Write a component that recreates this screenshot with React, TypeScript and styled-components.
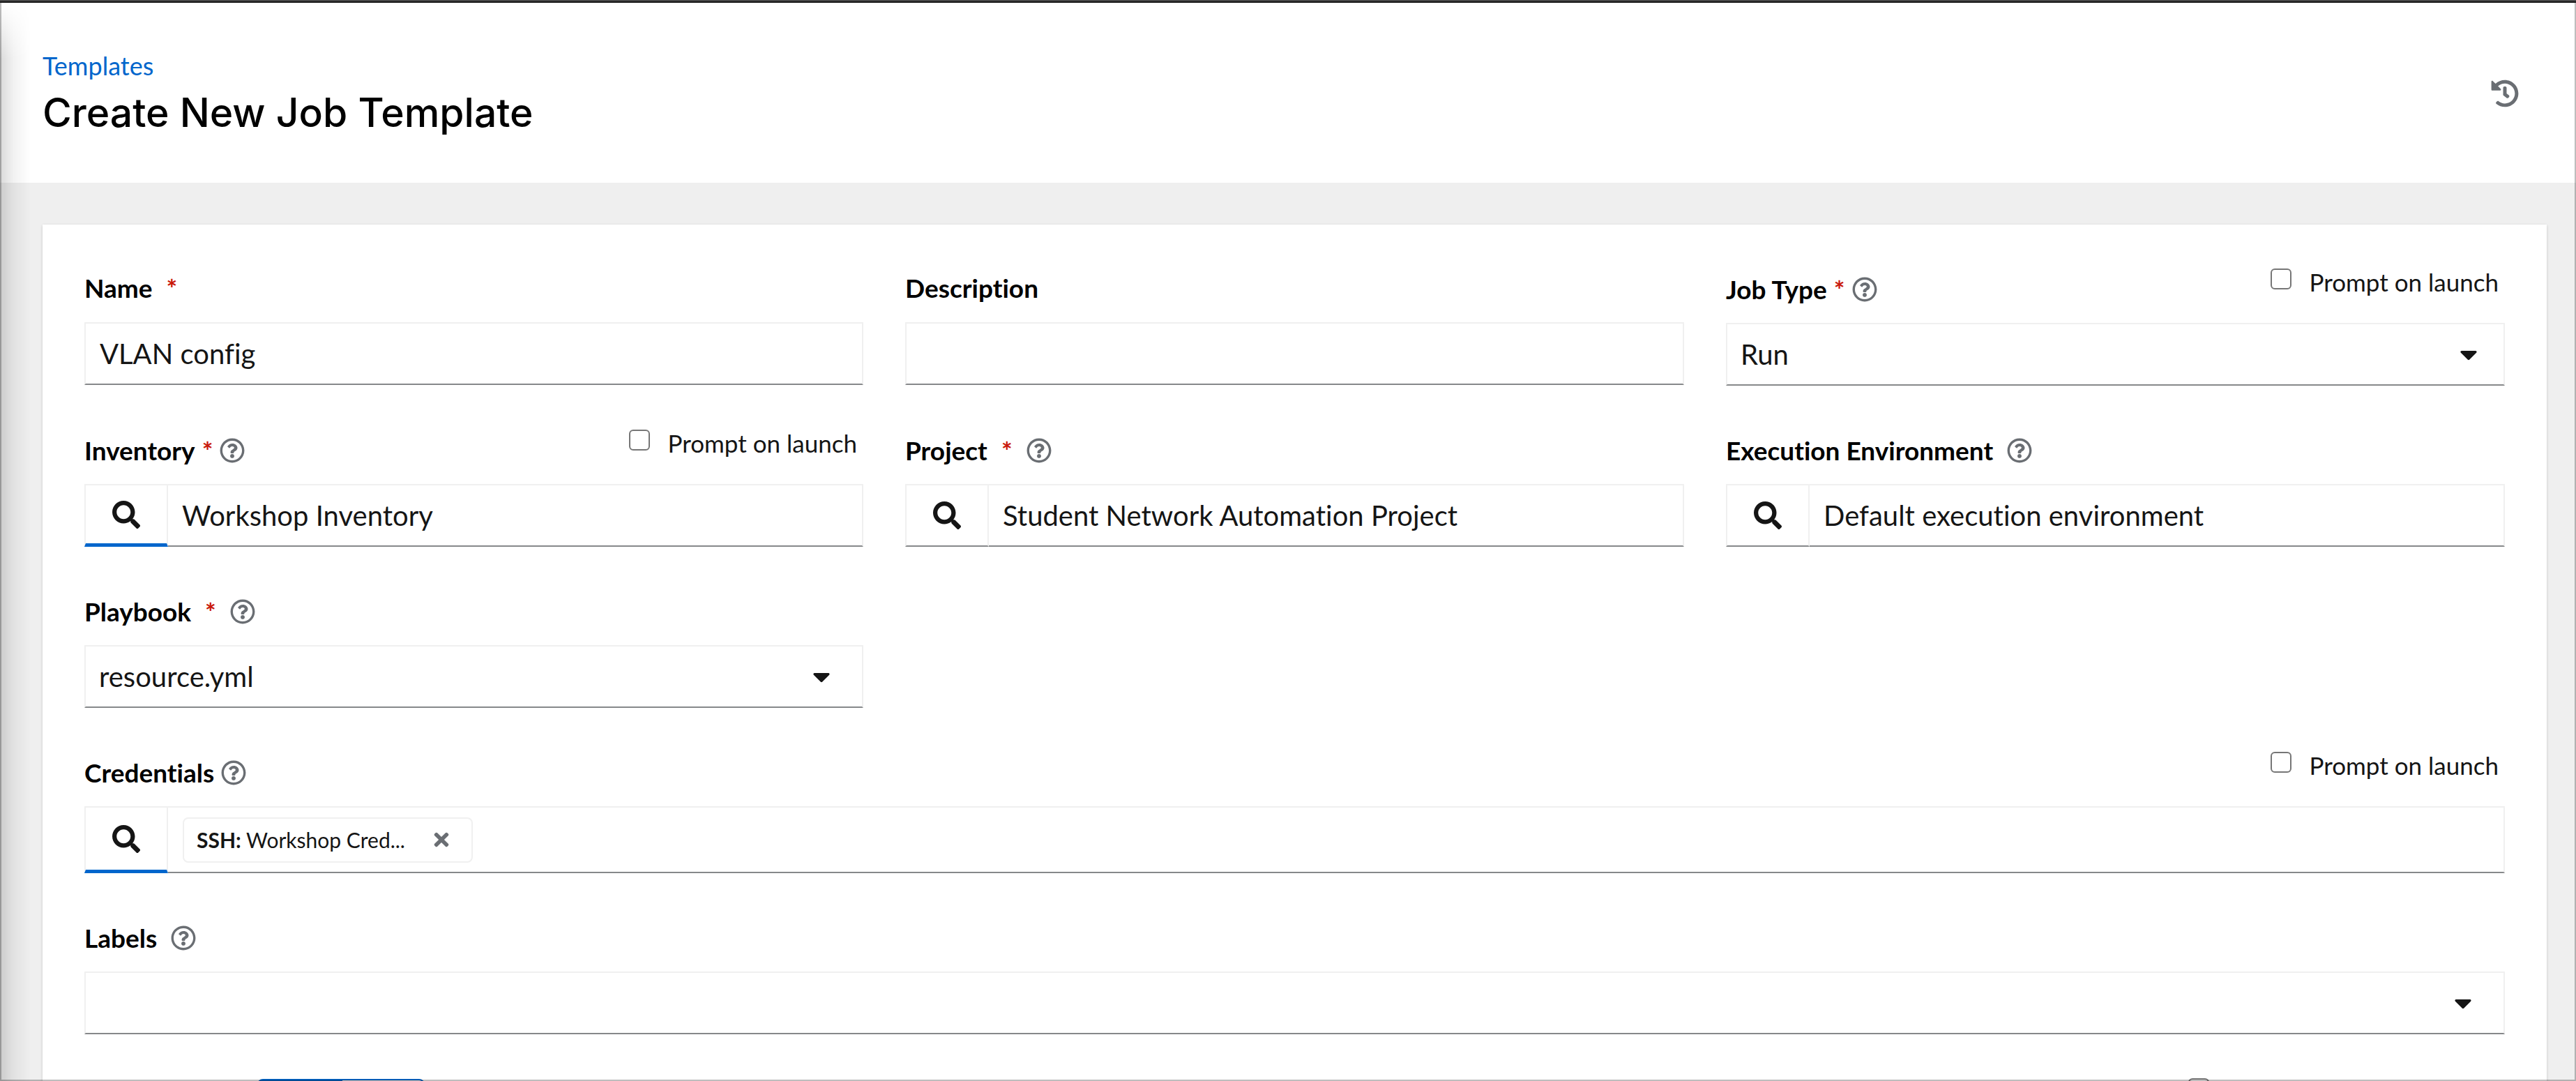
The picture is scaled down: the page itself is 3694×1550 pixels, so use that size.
import React, { useId } from 'react';
import styled, { createGlobalStyle } from 'styled-components';
import { FaCaretDown, FaHistory, FaRegQuestionCircle, FaSearch, FaTimes } from 'react-icons/fa';

const GlobalStyle = createGlobalStyle`
  * { box-sizing: border-box; }
  body {
    margin: 0;
    background: #efefef;
    color: #151515;
    font-family: Lato, 'Open Sans', sans-serif;
    font-size: 40px;
    font-variant-ligatures: none;
  }
  button, input, select { font-family: inherit; font-variant-ligatures: inherit; color: inherit; margin: 0; }
`;

const Page = styled.div`
  position: relative;
  height: 100vh;
  overflow: hidden;
  display: flex;
  flex-direction: column;

  &::after {
    content: '';
    position: absolute;
    inset: 4px 0 0;
    border: 2px solid rgba(0, 0, 0, 0.26);
    border-top: 0;
    pointer-events: none;
  }
`;

const MastheadEdge = styled.div`
  flex: none;
  height: 4px;
  background: #151515;
  border-top: 2px solid #484848;
`;

const SidebarShadow = styled.div`
  position: absolute;
  top: 4px;
  bottom: 0;
  left: 0;
  width: 44px;
  background: linear-gradient(to right, rgba(0, 0, 0, 0.15), rgba(0, 0, 0, 0.05) 45%, transparent);
  mask-image: linear-gradient(to bottom, transparent, #000 80px);
  pointer-events: none;
`;

const Header = styled.header`
  flex: none;
  display: flex;
  align-items: center;
  justify-content: space-between;
  padding: 62px 82px 60px 61px;
  background: #fff;
`;

const Breadcrumb = styled.a`
  display: block;
  font-size: 36px;
  line-height: 56px;
  color: #0066cc;
  text-decoration: none;
`;

const Title = styled.h1`
  margin: 0;
  font-family: Inter, sans-serif;
  font-size: 57px;
  line-height: 80px;
  font-weight: 500;
  color: #000;
`;

const IconButton = styled.button`
  display: flex;
  padding: 0;
  border: 0;
  background: none;
  color: #6a6e73;
  cursor: pointer;
`;

const Main = styled.main`
  flex: none;
  padding: 60px 42px 60px 61px;
`;

const Card = styled.form`
  display: grid;
  grid-template-columns: repeat(3, minmax(0, 1fr));
  gap: 60px;
  align-items: start;
  padding: 60px;
  background: #fff;
  box-shadow: 0 2px 4px rgba(3, 3, 3, 0.12), 0 0 4px rgba(3, 3, 3, 0.06);
`;

const Group = styled.div<{ $full?: boolean; $alone?: boolean }>`
  ${(p) => p.$full && 'grid-column: 1 / -1;'}
  ${(p) => p.$alone && 'grid-column: 1 / 2;'}
`;

const LabelRow = styled.div<{ $short?: boolean }>`
  display: flex;
  justify-content: space-between;
  align-items: flex-start;
  height: ${(p) => (p.$short ? 80 : 81)}px;
  padding-top: ${(p) => (p.$short ? 8 : 0)}px;
`;

const LabelCell = styled.div<{ $gap: number; $help?: boolean }>`
  display: flex;
  align-items: center;
  gap: ${(p) => p.$gap}px;
  padding-top: ${(p) => (p.$help ? 10 : 0)}px;
`;

const Label = styled.label<{ $gap: number }>`
  display: flex;
  gap: ${(p) => p.$gap}px;
  font-size: 37px;
  line-height: 46px;
  font-weight: 700;
  color: #000;
`;

const Required = styled.span`
  color: #c9190b;
`;

const Prompt = styled.label`
  display: flex;
  align-items: flex-start;
  gap: 25px;
  padding-right: 9px;
  font-size: 35px;
  line-height: 45px;
`;

const Checkbox = styled.input`
  appearance: none;
  width: 30px;
  height: 30px;
  margin-top: 3px;
  border: 2px solid #767676;
  border-radius: 6px;
  background: #fff;
`;

const Box = styled.div<{ $tall?: boolean }>`
  position: relative;
  display: flex;
  height: ${(p) => (p.$tall ? 96 : 90)}px;
`;

const edge = `
  border: 2px solid #f0f0f0;
  border-bottom-color: #86888a;
  border-radius: 0;
  background: #fff;
`;

const TextInput = styled.input<{ $joined?: boolean }>`
  ${edge}
  ${(p) => p.$joined && 'border-left: 0;'}
  flex: 1;
  min-width: 0;
  padding: 0 20px;
  font-size: 40px;
`;

const Select = styled.select`
  ${edge}
  appearance: none;
  flex: 1;
  min-width: 0;
  padding: 0 19px;
  font-size: 40px;
`;

const Caret = styled(FaCaretDown)<{ $inset: number }>`
  position: absolute;
  top: 25px;
  right: ${(p) => p.$inset}px;
  width: 40px;
  height: 40px;
  pointer-events: none;
`;

const SearchButton = styled.button<{ $active?: boolean }>`
  ${edge}
  flex: none;
  width: 120px;
  display: flex;
  align-items: center;
  justify-content: center;
  padding: 0;
  cursor: pointer;
  ${(p) => p.$active && 'border-bottom: 5px solid #0066cc;'}
`;

const ChipArea = styled.div`
  ${edge}
  border-left: 0;
  flex: 1;
  display: flex;
  align-items: center;
  padding: 0 21px;
`;

const Chip = styled.div`
  display: flex;
  align-items: center;
  justify-content: space-between;
  width: 416px;
  height: 65px;
  padding: 0 28px 0 18px;
  border: 2px solid #f0f0f0;
  border-radius: 8px;
  font-size: 30px;
  white-space: nowrap;
`;

const VariablesRow = styled.div`
  grid-column: 1 / -1;
  display: flex;
  justify-content: space-between;
  align-items: flex-start;
  padding: 0 424px 0 248px;
`;

const ToggleGroup = styled.div`
  display: flex;
  margin-top: 4px;
`;

const Toggle = styled.button<{ $on?: boolean }>`
  width: 120px;
  height: 60px;
  border: 2px solid #0066cc;
  border-radius: ${(p) => (p.$on ? '8px 0 0 8px' : '0 8px 8px 0')};
  background: ${(p) => (p.$on ? '#0066cc' : '#fff')};
`;

type FieldProps = {
  label: string;
  required?: boolean;
  help?: boolean;
  tight?: boolean;
  prompt?: boolean;
  full?: boolean;
  alone?: boolean;
  children: (id: string) => React.ReactNode;
};

function Field({ label, required, help, tight, prompt, full, alone, children }: FieldProps) {
  const id = useId();
  const gap = tight ? 10 : 20;
  return (
    <Group $full={full} $alone={alone}>
      <LabelRow $short={!help}>
        <LabelCell $gap={gap} $help={help}>
          <Label htmlFor={id} $gap={gap}>
            {label}
            {required && <Required aria-hidden="true">*</Required>}
          </Label>
          {help && (
            <IconButton type="button" aria-label={`More info for ${label}`}>
              <FaRegQuestionCircle size={36} />
            </IconButton>
          )}
        </LabelCell>
        {prompt && (
          <Prompt>
            <Checkbox type="checkbox" />
            Prompt on launch
          </Prompt>
        )}
      </LabelRow>
      {children(id)}
    </Group>
  );
}

function SelectBox({ id, options, inset }: { id: string; options: string[]; inset: number }) {
  return (
    <Box>
      <Select id={id}>
        {options.map((o) => (
          <option key={o}>{o}</option>
        ))}
      </Select>
      <Caret $inset={inset} />
    </Box>
  );
}

function Lookup({ id, value, active }: { id: string; value: string; active?: boolean }) {
  return (
    <Box>
      <SearchButton type="button" aria-label="Search" $active={active}>
        <FaSearch size={40} />
      </SearchButton>
      <TextInput id={id} type="text" defaultValue={value} $joined />
    </Box>
  );
}

export default function App() {
  return (
    <>
      <GlobalStyle />
      <Page>
        <MastheadEdge />
        <Header>
          <div>
            <Breadcrumb href="#templates">Templates</Breadcrumb>
            <Title>Create New Job Template</Title>
          </div>
          <IconButton type="button" aria-label="View activity stream">
            <FaHistory size={40} />
          </IconButton>
        </Header>
        <Main>
          <Card>
            <Field label="Name" required>
              {(id) => (
                <Box>
                  <TextInput id={id} type="text" defaultValue="VLAN config" />
                </Box>
              )}
            </Field>
            <Field label="Description">
              {(id) => (
                <Box>
                  <TextInput id={id} type="text" />
                </Box>
              )}
            </Field>
            <Field label="Job Type" required help tight prompt>
              {(id) => <SelectBox id={id} options={['Run']} inset={32} />}
            </Field>
            <Field label="Inventory" required help tight prompt>
              {(id) => <Lookup id={id} value="Workshop Inventory" active />}
            </Field>
            <Field label="Project" required help>
              {(id) => <Lookup id={id} value="Student Network Automation Project" />}
            </Field>
            <Field label="Execution Environment" help>
              {(id) => <Lookup id={id} value="Default execution environment" />}
            </Field>
            <Field label="Playbook" required help alone>
              {(id) => <SelectBox id={id} options={['resource.yml']} inset={40} />}
            </Field>
            <Field label="Credentials" help tight prompt full>
              {(id) => (
                <Box $tall>
                  <SearchButton id={id} type="button" $active>
                    <FaSearch size={40} />
                  </SearchButton>
                  <ChipArea>
                    <Chip>
                      <span>
                        <b>SSH:</b> Workshop Cred...
                      </span>
                      <IconButton type="button" aria-label="Remove credential">
                        <FaTimes size={30} />
                      </IconButton>
                    </Chip>
                  </ChipArea>
                </Box>
              )}
            </Field>
            <Field label="Labels" help full>
              {(id) => <SelectBox id={id} options={['']} inset={40} />}
            </Field>
            <VariablesRow>
              <ToggleGroup>
                <Toggle type="button" aria-label="YAML" $on />
                <Toggle type="button" aria-label="JSON" />
              </ToggleGroup>
              <Checkbox type="checkbox" aria-label="Prompt on launch" />
            </VariablesRow>
          </Card>
        </Main>
        <SidebarShadow />
      </Page>
    </>
  );
}
